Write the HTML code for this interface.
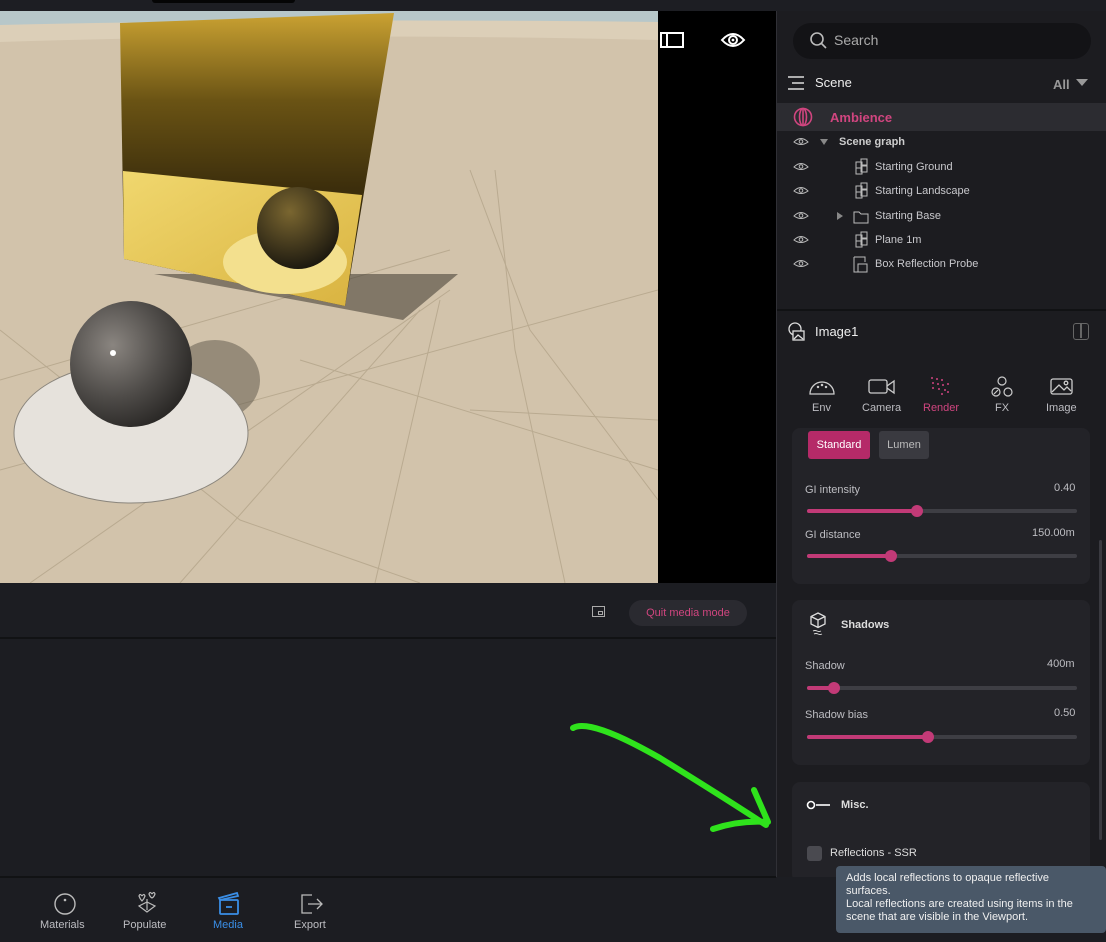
<!DOCTYPE html>
<html><head><meta charset="utf-8"><style>
*{margin:0;padding:0;box-sizing:border-box}
body{width:1106px;height:942px;overflow:hidden;background:#1c1d22;font-family:"Liberation Sans",sans-serif;position:relative;color:#ddd}
.a{position:absolute}
.t{font-size:11px;color:#c8c8cc}
.lab{font-size:11px;color:#bdbdc2}
.track{position:absolute;height:4px;border-radius:2px;background:#3e3e44}
.fill{position:absolute;left:0;top:0;height:4px;border-radius:2px;background:#c23a77}
.knob{position:absolute;top:-4px;width:12px;height:12px;border-radius:6px;background:#c23a77}
.card{position:absolute;left:792px;width:298px;background:#232328;border-radius:8px}
</style></head><body>
<div class="a" style="left:0;top:0;width:1106px;height:11px;background:#1d1e23"></div>
<div class="a" style="left:152px;top:0;width:143px;height:3px;background:#050505;border-radius:0 0 4px 4px"></div>
<!-- viewport -->
<svg class="a" style="left:0;top:11px" width="658" height="572" viewBox="0 11 658 572">
<defs>
<linearGradient id="gp" x1="0" y1="0" x2="0" y2="1"><stop offset="0" stop-color="#caa232"/><stop offset="0.3" stop-color="#6a5314"/><stop offset="0.6" stop-color="#3c2e0c"/><stop offset="1" stop-color="#2e2408"/></linearGradient>
<linearGradient id="gy" x1="0" y1="0" x2="1" y2="1"><stop offset="0" stop-color="#f0d76e"/><stop offset="1" stop-color="#d9b340"/></linearGradient>
<radialGradient id="sp" cx="0.35" cy="0.35" r="0.7"><stop offset="0" stop-color="#8a8580"/><stop offset="0.6" stop-color="#4e4b48"/><stop offset="1" stop-color="#2a2826"/></radialGradient>
<radialGradient id="sp2" cx="0.4" cy="0.3" r="0.7"><stop offset="0" stop-color="#7a6630"/><stop offset="1" stop-color="#1e1a10"/></radialGradient>
</defs>
<rect x="0" y="11" width="658" height="572" fill="#d2c3ab"/>
<rect x="0" y="11" width="658" height="14" fill="#b7c7c9"/>
<path d="M0 25 Q300 18 658 22 L658 40 Q300 32 0 42Z" fill="#dccfb8"/>
<g stroke="#b9aa90" stroke-width="1" fill="none">
<path d="M0 470 L658 290"/><path d="M0 380 L450 250"/><path d="M30 583 L450 290"/><path d="M180 583 L420 310"/><path d="M375 583 L440 300"/><path d="M565 583 L515 350 L495 170"/><path d="M658 500 L530 330 L470 170"/><path d="M0 330 L240 520 L420 583"/><path d="M300 360 L658 470"/><path d="M470 410 L658 420"/>
</g>
<path d="M154 274 L458 274 L403 320 L323 305 Z" fill="#3e3830" opacity="0.55"/>
<ellipse cx="215" cy="380" rx="45" ry="40" fill="#5a5348" opacity="0.5"/>
<polygon points="120,23 394,13 345,306 124,259" fill="url(#gp)"/>
<polygon points="123,171 362,195 345,306 124,259" fill="url(#gy)"/>
<ellipse cx="285" cy="262" rx="62" ry="32" fill="#f3e08e"/>
<ellipse cx="298" cy="228" rx="41" ry="41" fill="url(#sp2)"/>
<ellipse cx="131" cy="433" rx="117" ry="70" fill="#e6e2dc" stroke="#8a857c"/>
<ellipse cx="131" cy="364" rx="61" ry="63" fill="url(#sp)"/>
<circle cx="113" cy="353" r="3" fill="#fff"/>
</svg>
<div class="a" style="left:658px;top:11px;width:118px;height:572px;background:#000"></div>
<div class="a" style="left:660px;top:32px;width:24px;height:16px;border:2px solid #fff"><div style="position:absolute;left:4px;top:0;width:2px;height:12px;background:#fff"></div></div>
<svg class="a" style="left:720px;top:30px" width="26" height="20" viewBox="0 0 26 20"><path d="M2 10 Q13 -2 24 10 Q13 22 2 10Z" fill="none" stroke="#fff" stroke-width="2"/><circle cx="13" cy="10" r="4" fill="none" stroke="#fff" stroke-width="2"/><circle cx="13" cy="10" r="1.4" fill="#fff"/></svg>
<!-- below viewport -->
<div class="a" style="left:0;top:583px;width:776px;height:56px;background:#1c1d22;border-bottom:2px solid #111214"></div>
<div class="a" style="left:592px;top:606px;width:13px;height:11px;border:1.5px solid #aaa"><div style="position:absolute;right:1px;bottom:1px;width:5px;height:4px;border:1px solid #aaa"></div></div>
<div class="a" style="left:629px;top:600px;width:118px;height:26px;border-radius:13px;background:#2a2a30;color:#d0457f;font-size:11px;line-height:26px;text-align:center">Quit media mode</div>
<div class="a" style="left:0;top:640px;width:776px;height:237px;background:#1c1d22"></div>
<div class="a" style="left:0;top:876px;width:776px;height:2px;background:#111214"></div>
<!-- nav -->
<svg class="a" style="left:52px;top:893px" width="26" height="24"><circle cx="13" cy="11" r="10" fill="none" stroke="#bbb" stroke-width="1.4"/><circle cx="13" cy="7" r="1.3" fill="#bbb"/></svg>
<div class="a lab" style="left:40px;top:919px">Materials</div>
<svg class="a" style="left:134px;top:890px" width="26" height="26" fill="none" stroke="#bbb" stroke-width="1.2"><path d="M13 22 L5 16 L13 12 L21 16Z"/><path d="M13 20 V9"/><path d="M8 6 q2-3 3 0 q-1 3-3 5 q-2-2-3-5 q1-3 3 0"/><path d="M18 4 q2-3 3 0 q-1 3-3 4 q-2-1-3-4 q1-3 3 0"/></svg>
<div class="a lab" style="left:123px;top:919px">Populate</div>
<svg class="a" style="left:216px;top:890px" width="26" height="28" fill="none" stroke="#3a8ee6" stroke-width="1.8"><rect x="4" y="10" width="18" height="14" rx="1"/><path d="M3 8 L21 3 L22 6 L4 10Z"/><path d="M10 17 h6"/></svg>
<div class="a" style="left:213px;top:919px;font-size:11px;color:#3a8ee6">Media</div>
<svg class="a" style="left:298px;top:892px" width="28" height="24" fill="none" stroke="#bbb" stroke-width="1.3"><path d="M14 3 H4 V21 H14"/><path d="M10 12 H24 M19 7 L24 12 L19 17"/></svg>
<div class="a lab" style="left:294px;top:919px">Export</div>
<!-- arrow -->
<svg class="a" style="left:560px;top:715px" width="220" height="125" viewBox="560 715 220 125"><path d="M573 728 Q590 718 660 758 Q720 795 766 825" fill="none" stroke="#2fe31c" stroke-width="6" stroke-linecap="round"/><path d="M713 829 Q740 820 768 822 L754 790" fill="none" stroke="#2fe31c" stroke-width="6" stroke-linecap="round" stroke-linejoin="round"/></svg>
<!-- right panel -->
<div class="a" style="left:776px;top:11px;width:330px;height:866px;background:#1c1c20;border-left:1px solid #303036"></div>
<div class="a" style="left:793px;top:23px;width:298px;height:36px;border-radius:18px;background:#131316"></div>
<svg class="a" style="left:809px;top:31px" width="20" height="20" fill="none" stroke="#bbb" stroke-width="1.6"><circle cx="8" cy="8" r="6"/><path d="M12.5 12.5 L17 17"/></svg>
<div class="a" style="left:834px;top:32px;font-size:14px;color:#aaa">Search</div>
<svg class="a" style="left:787px;top:75px" width="20" height="16" stroke="#ddd" stroke-width="1.6"><path d="M1 2h16M5 8h12M1 14h16"/></svg>
<div class="a" style="left:815px;top:75px;font-size:13px;color:#eee">Scene</div>
<div class="a" style="left:1053px;top:77px;font-size:13px;color:#999;font-weight:bold">All</div>
<div class="a" style="left:1076px;top:79px;width:0;height:0;border-left:6px solid transparent;border-right:6px solid transparent;border-top:7px solid #999"></div>
<div class="a" style="left:777px;top:103px;width:329px;height:28px;background:#2c2c31"></div>
<svg class="a" style="left:793px;top:107px" width="20" height="20" fill="none" stroke="#d0457f" stroke-width="1.6"><circle cx="10" cy="10" r="8.5"/><ellipse cx="10" cy="10" rx="3.5" ry="8.5"/><path d="M10 1.5v17"/></svg>
<div class="a" style="left:830px;top:110px;font-size:13px;font-weight:bold;color:#d0457f">Ambience</div>
<div class="a t" style="left:839px;top:136px;font-weight:bold;color:#ccc">Scene graph</div>
<div class="a" style="left:820px;top:139px;border-left:4px solid transparent;border-right:4px solid transparent;border-top:6px solid #888"></div>
<div class="a t" style="left:875px;top:161px">Starting Ground</div>
<div class="a t" style="left:875px;top:185px">Starting Landscape</div>
<div class="a t" style="left:875px;top:210px">Starting Base</div>
<div class="a" style="left:837px;top:212px;border-top:4px solid transparent;border-bottom:4px solid transparent;border-left:6px solid #888"></div>
<div class="a t" style="left:875px;top:234px">Plane 1m</div>
<div class="a t" style="left:875px;top:258px">Box Reflection Probe</div>
<svg class="a" style="left:790px;top:130px" width="80" height="145" fill="none" stroke="#bbb" stroke-width="1">
<g id="e"><path d="M4 12 Q11 5 18 12 Q11 17 4 12Z"/><circle cx="11" cy="11.5" r="1.8"/></g>
<use href="#e" y="25"/><use href="#e" y="49"/><use href="#e" y="74"/><use href="#e" y="98"/><use href="#e" y="122"/>
<g id="m"><rect x="66" y="32" width="6" height="6"/><rect x="71" y="29" width="6" height="6"/><rect x="66" y="38" width="6" height="6"/><rect x="71" y="36" width="6" height="6"/></g>
<use href="#m" y="24"/><use href="#m" y="73"/>
<path d="M64 82 h5 l2 2 h7 v9 h-14z"/>
<path d="M64 127 v15 h4 M64 127 h11 v5"/><rect x="68" y="134" width="9" height="8"/>
</svg>
<div class="a" style="left:777px;top:309px;width:329px;height:2px;background:#111214"></div>
<svg class="a" style="left:788px;top:322px" width="18" height="20" fill="none" stroke="#ddd" stroke-width="1.3"><circle cx="7" cy="7" r="6"/><rect x="5" y="9" width="11" height="9" fill="#1c1c20"/><path d="M6 17 l4-4 l5 4"/></svg>
<div class="a" style="left:815px;top:324px;font-size:13px;color:#eee">Image1</div>
<div class="a" style="left:1073px;top:323px;width:16px;height:17px;border:1.5px solid #666;border-radius:3px"><div style="position:absolute;left:6px;top:0;width:1.5px;height:14px;background:#666"></div></div>
<!-- tabs -->
<svg class="a" style="left:808px;top:377px" width="28" height="18" fill="none" stroke="#ccc" stroke-width="1.3"><path d="M2 17 A12 12 0 0 1 26 17Z"/><circle cx="10" cy="10" r=".6"/><circle cx="14" cy="8" r=".6"/><circle cx="18" cy="10" r=".6"/></svg>
<div class="a lab" style="left:812px;top:402px">Env</div>
<svg class="a" style="left:868px;top:378px" width="28" height="18" fill="none" stroke="#ccc" stroke-width="1.3"><rect x="1" y="2" width="18" height="13" rx="2"/><path d="M19 8 L26 3 V15 L19 10"/></svg>
<div class="a lab" style="left:862px;top:402px">Camera</div>
<svg class="a" style="left:929px;top:376px" width="24" height="20" fill="#d0457f"><circle cx="3" cy="2" r="1"/><circle cx="8" cy="3" r="1"/><circle cx="13" cy="4" r="1"/><circle cx="4" cy="7" r="1"/><circle cx="9" cy="8" r="1"/><circle cx="14" cy="9" r="1"/><circle cx="19" cy="8" r="1"/><circle cx="4" cy="12" r="1"/><circle cx="10" cy="13" r="1"/><circle cx="16" cy="14" r="1"/><circle cx="19" cy="16" r="1"/><circle cx="13" cy="18" r="1"/></svg>
<div class="a" style="left:923px;top:402px;font-size:11px;color:#d0457f">Render</div>
<svg class="a" style="left:989px;top:376px" width="26" height="22" fill="none" stroke="#ccc" stroke-width="1.2"><circle cx="13" cy="5" r="4"/><circle cx="7" cy="16" r="4"/><circle cx="19" cy="16" r="4"/><path d="M5 18 L9 14"/></svg>
<div class="a lab" style="left:995px;top:402px">FX</div>
<svg class="a" style="left:1050px;top:378px" width="24" height="18" fill="none" stroke="#ccc" stroke-width="1.3"><rect x="1" y="1" width="21" height="15" rx="2"/><path d="M2 14 L9 7 L14 12 L17 9 L21 13"/><circle cx="16" cy="5" r="1.8"/></svg>
<div class="a lab" style="left:1046px;top:402px">Image</div>
<div class="card" style="top:428px;height:156px"></div>
<div class="a" style="left:808px;top:431px;width:62px;height:28px;background:#b52a68;border-radius:3px;color:#fff;font-size:11px;line-height:28px;text-align:center">Standard</div>
<div class="a" style="left:879px;top:431px;width:50px;height:28px;background:#3a3a40;border-radius:3px;color:#bbb;font-size:11px;line-height:28px;text-align:center">Lumen</div>
<div class="a lab" style="left:805px;top:484px">GI intensity</div>
<div class="a lab" style="left:1054px;top:482px">0.40</div>
<div class="track" style="left:807px;top:509px;width:270px"><div class="fill" style="width:110px"></div><div class="knob" style="left:104px"></div></div>
<div class="a lab" style="left:805px;top:529px">GI distance</div>
<div class="a lab" style="left:1032px;top:527px">150.00m</div>
<div class="track" style="left:807px;top:554px;width:270px"><div class="fill" style="width:84px"></div><div class="knob" style="left:78px"></div></div>
<div class="card" style="top:600px;height:165px"></div>
<svg class="a" style="left:808px;top:612px" width="20" height="26" fill="none" stroke="#ddd" stroke-width="1.3"><path d="M10 1 L17 4.5 V12 L10 15.5 L3 12 V4.5Z M3 4.5 L10 8 L17 4.5 M10 8 V15.5"/><path d="M5 19 q2-1 4 0 q2 1 4 0 M6 22 q2-1 4 0 q2 1 4 0" stroke-width="0.9"/></svg>
<div class="a" style="left:841px;top:619px;font-size:11px;font-weight:bold;color:#ddd">Shadows</div>
<div class="a lab" style="left:805px;top:660px">Shadow</div>
<div class="a lab" style="left:1047px;top:658px">400m</div>
<div class="track" style="left:807px;top:686px;width:270px"><div class="fill" style="width:27px"></div><div class="knob" style="left:21px"></div></div>
<div class="a lab" style="left:805px;top:709px">Shadow bias</div>
<div class="a lab" style="left:1054px;top:707px">0.50</div>
<div class="track" style="left:807px;top:735px;width:270px"><div class="fill" style="width:120px"></div><div class="knob" style="left:115px"></div></div>
<div class="card" style="top:782px;height:100px"></div>
<svg class="a" style="left:806px;top:799px" width="26" height="12" fill="none" stroke="#fff" stroke-width="1.6"><circle cx="5" cy="6" r="3.5"/><path d="M10 6 H24"/></svg>
<div class="a" style="left:841px;top:799px;font-size:11px;font-weight:bold;color:#ddd">Misc.</div>
<div class="a" style="left:807px;top:846px;width:15px;height:15px;border-radius:3px;background:#4a4a50"></div>
<div class="a t" style="left:830px;top:847px;color:#ddd">Reflections - SSR</div>
<div class="a" style="left:1099px;top:540px;width:3px;height:300px;background:#3a3a40;border-radius:2px"></div>
<div class="a" style="left:777px;top:877px;width:60px;height:65px;background:#1c1d22"></div>
<div class="a" style="left:836px;top:866px;width:270px;height:67px;background:#4a5868;border-radius:4px;padding:6px 10px;font-size:11px;line-height:13px;color:#f0f0f0">Adds local reflections to opaque reflective surfaces.<br>Local reflections are created using items in the scene that are visible in the Viewport.</div>
</body></html>
